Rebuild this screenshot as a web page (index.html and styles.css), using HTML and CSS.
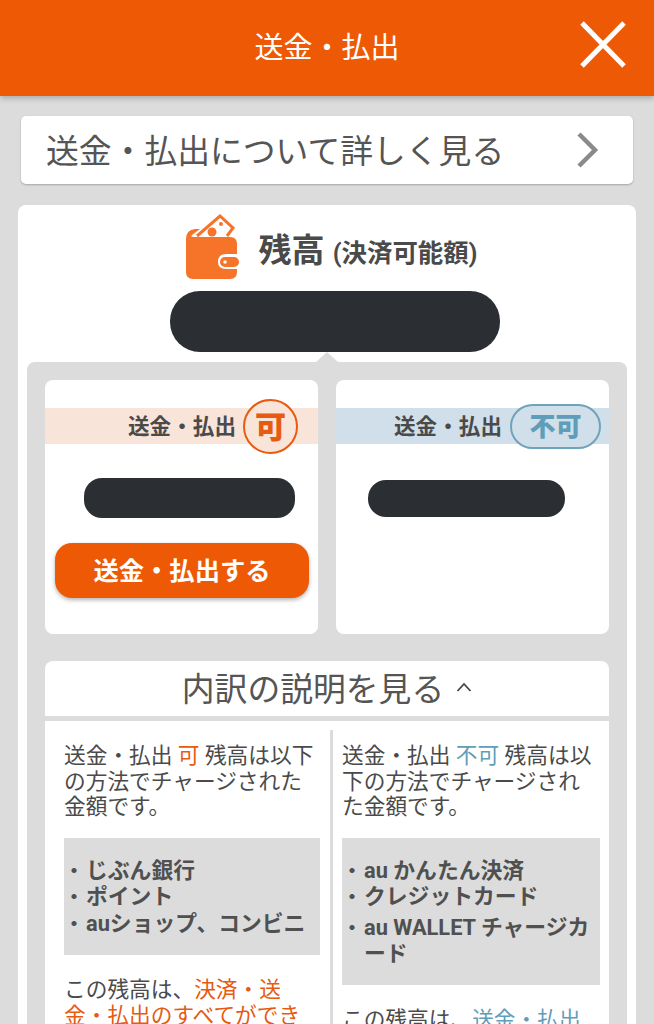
FILE: index.html
```html
<!DOCTYPE html>
<html lang="ja">
  <head>
    <meta charset="UTF-8" />
    <meta name="viewport" content="width=device-width, initial-scale=1.0" />
    <title>送金・払出</title>
    <link rel="stylesheet" href="styles.css">
  </head>
  <body>
    <header class="top-bar">
      <h1 class="top-title">送金・払出</h1>
      <svg class="close-icon" width="50" height="50" viewBox="0 0 50 50">
        <path d="M4 3 L46 46 M46 3 L4 46" stroke="#fff" stroke-width="5" fill="none" />
      </svg>
    </header>

    <a class="detail-link">
      <span class="detail-text">送金・払出について詳しく見る</span>
      <svg width="24" height="36" viewBox="0 0 24 36">
        <path d="M3 2 L19 18 L3 34" stroke="#8a8a8a" stroke-width="4.5" fill="none" />
      </svg>
    </a>

    <main class="balance-card">
      <div class="balance-head">
        <svg class="wallet-icon" width="56" height="68" viewBox="0 0 56 68">
          <path d="M13 23 L36 3 L49 15 L43 23" stroke="#f6732a" stroke-width="3" fill="#fff" />
          <circle cx="28" cy="19" r="4.500" fill="#f6732a" />
          <circle cx="37" cy="11" r="2" fill="#f6732a" />
          <path d="M2 26 Q2 17 11 16 L16 16 L8 22 Q6 24 10 24 L46 24 Q53 24 53 31 L53 41 L42 41 Q34 41 34 49 Q34 56 42 56 L53 56 L53 59 Q53 66 46 66 L9 66 Q2 66 2 59 Z" fill="#f6732a" />
          <rect x="36" y="44" width="19" height="10" rx="5" fill="#f6732a" />
          <circle cx="41" cy="49" r="1.800" fill="#fff" />
        </svg>
        <div class="balance-title">残高 <small>(決済可能額)</small></div>
      </div>
      <div class="blot blot-total"></div>

      <div class="breakdown">
        <div class="split-row">
          <section class="split-card">
            <div class="split-label label-ok">
              <span class="label-text">送金・払出</span>
              <b class="badge badge-ok">可</b>
            </div>
            <div class="blot blot-ok"></div>
            <button class="send-btn" type="button">送金・払出する</button>
          </section>
          <section class="split-card">
            <div class="split-label label-ng">
              <span class="label-text">送金・払出</span>
              <b class="badge badge-ng">不可</b>
            </div>
            <div class="blot blot-ng"></div>
          </section>
        </div>

        <section class="explain">
          <div class="explain-head">内訳の説明を見る <svg width="16" height="10" viewBox="0 0 16 10"><path d="M1.500 9 L8 2 L14.500 9" stroke="#444" stroke-width="1.800" fill="none" /></svg></div>
          <div class="explain-body">
            <div class="explain-col col-left">
              <p>送金・払出 <span class="text-ok">可</span> 残高は以下の方法でチャージされた金額です。</p>
              <ul class="method-box">
                <li>じぶん銀行</li>
                <li>ポイント</li>
                <li>auショップ、コンビニ</li>
              </ul>
              <p>この残高は、<span class="text-ok">決済・送金・払出のすべてができます。</span></p>
            </div>
            <div class="explain-col col-right">
              <p>送金・払出 <span class="text-ng">不可</span> 残高は以下の方法でチャージされた金額です。</p>
              <ul class="method-box">
                <li>au かんたん決済</li>
                <li>クレジットカード</li>
                <li>au WALLET チャージカード</li>
              </ul>
              <p>この残高は、<span class="text-ng">送金・払出はできません。</span></p>
            </div>
          </div>
        </section>
      </div>
    </main>
  </body>
</html>
```

FILE: styles.css
```css
html,
body {
  height: 1024px;
  overflow: hidden;
}

body {
  margin: 0;
  background-color: #dcdcdc;
  color: #4a4a4a;
  font-family: Roboto, "Noto Sans CJK JP", sans-serif;
}

.top-bar {
  height: 96px;
  padding-bottom: 6px;
  box-sizing: border-box;
  background-color: #ee5905;
  box-shadow: 0 2px 6px rgba(0, 0, 0, 0.25);
  display: flex;
  align-items: center;
  justify-content: center;
  position: relative;
}

.top-title {
  margin: 0;
  color: #fff;
  font-size: 29px;
  font-weight: 400;
}

.close-icon {
  position: absolute;
  left: 578px;
  top: 20px;
}

.detail-link {
  margin: 20px 21px 0;
  height: 68px;
  padding: 0 33px 0 25px;
  box-sizing: border-box;
  background-color: #fff;
  border-radius: 5px;
  box-shadow: 0 1px 2px rgba(0, 0, 0, 0.25);
  display: flex;
  align-items: center;
  justify-content: space-between;
  font-size: 32.800px;
  color: #555;
}

.detail-text {
  margin-bottom: 4px;
}

.balance-card {
  margin: 21px 18px 0;
  padding: 9px 9px 0;
  background-color: #fff;
  border-radius: 8px 8px 0 0;
}

.balance-head {
  height: 66px;
  display: flex;
  align-items: flex-start;
  justify-content: center;
  gap: 19px;
  padding-left: 7px;
}

.wallet-icon {
  margin-top: -1px;
}

.balance-title {
  margin-top: 15px;
  font-size: 33px;
  line-height: 44px;
  font-weight: 700;
}

.balance-title small {
  font-size: 25.400px;
}

.blot {
  background-color: #2b2f33;
}

.blot-total {
  width: 330px;
  height: 61px;
  margin: 11px 0 0 143px;
  border-radius: 30px;
}

.breakdown {
  margin-top: 10px;
  padding: 18px 18px 0;
  background-color: #dcdcdc;
  border-radius: 8px 8px 0 0;
  position: relative;
}

.breakdown::before {
  content: "";
  position: absolute;
  left: 289px;
  top: -10px;
  border-left: 11px solid transparent;
  border-right: 11px solid transparent;
  border-bottom: 10px solid #dcdcdc;
}

.split-row {
  display: grid;
  grid-template-columns: 273px 273px;
  gap: 18px;
}

.split-card {
  height: 254px;
  background-color: #fff;
  border-radius: 8px;
  overflow: hidden;
}

.split-label {
  height: 36px;
  margin-top: 28px;
  display: flex;
  align-items: center;
  justify-content: flex-end;
  font-size: 21.600px;
  font-weight: 700;
}

.label-text {
  margin-bottom: 3px;
}

.label-ok {
  background-color: #f9e4da;
  padding-right: 20px;
  gap: 7px;
}

.label-ng {
  background-color: #d0dfe9;
  padding-right: 8px;
  gap: 8px;
}

.badge {
  height: 45px;
  box-sizing: border-box;
  background-color: inherit;
  display: flex;
  align-items: center;
  justify-content: center;
  border-radius: 28px;
}

.badge-ok {
  width: 55px;
  height: 55px;
  padding-bottom: 3px;
  border: 2px solid #e65a12;
  color: #e65a12;
  font-size: 31px;
}

.badge-ng {
  width: 91px;
  padding-bottom: 3px;
  border: 2px solid #6fa3bb;
  color: #5f9db8;
  font-size: 26px;
}

.blot-ok {
  width: 211px;
  height: 40px;
  margin: 34px 0 0 39px;
  border-radius: 18px;
}

.blot-ng {
  width: 197px;
  height: 37px;
  margin: 36px 0 0 32px;
  border-radius: 18px;
}

.send-btn {
  display: block;
  width: 254px;
  height: 55px;
  margin: 25px 0 0 10px;
  padding: 0 0 4px;
  border: none;
  border-radius: 17px;
  background-color: #ee5905;
  box-shadow: 0 2px 4px rgba(0, 0, 0, 0.3);
  color: #fff;
  font-family: inherit;
  font-size: 25.300px;
  font-weight: 700;
}

.explain {
  margin-top: 27px;
  background-color: #fff;
  border-radius: 8px 8px 0 0;
}

.explain-head {
  height: 51px;
  padding-bottom: 4px;
  border-bottom: 5px solid #dcdcdc;
  display: flex;
  align-items: center;
  justify-content: center;
  gap: 12px;
  font-size: 32.800px;
  color: #555;
}

.explain-body {
  display: grid;
  grid-template-columns: 288px 276px;
  padding-top: 9px;
}

.explain-col p {
  margin: 0;
  font-size: 21.700px;
  line-height: 25.500px;
}

.col-left {
  padding: 13px 10px 0 19px;
  border-right: 3px solid #dcdcdc;
}

.col-right {
  padding: 13px 9px 0 9px;
}

.method-box {
  margin: 18px 0 22px;
  padding: 20px 4px 18px 0;
  list-style: none;
  background-color: #dcdcdc;
  color: #505050;
  font-size: 21.800px;
  font-weight: 700;
  line-height: 25.500px;
}

.method-box li {
  padding-left: 22px;
  text-indent: -22px;
}

.method-box li::before {
  content: "・";
  display: inline-block;
  width: 22px;
  text-indent: 0;
  font-size: 20px;
}

.col-right li:last-child {
  margin-top: 4px;
}

.text-ok {
  color: #e65a12;
}

.text-ng {
  color: #5f9db8;
}
```
